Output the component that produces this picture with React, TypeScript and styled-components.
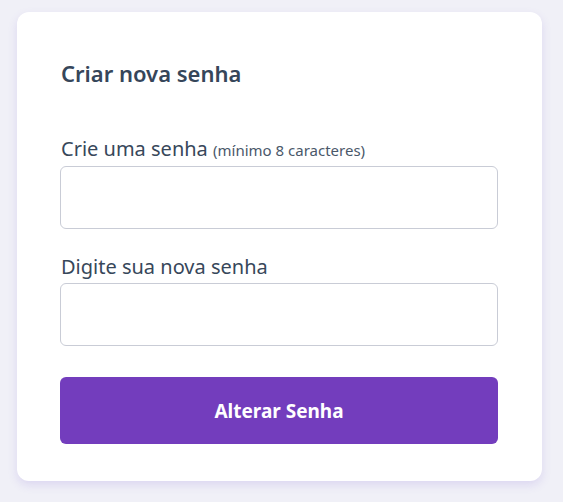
import React from "react";
import styled, { createGlobalStyle } from "styled-components";

const GlobalStyle = createGlobalStyle`
  html, body {
    margin: 0;
    padding: 0;
    background: #f0f0f7;
    font-family: "Noto Sans", "Open Sans", sans-serif;
  }
  * { box-sizing: border-box; }
`;

const Page = styled.div`
  padding: 12px 21px 22px 17px;
`;

const Card = styled.form`
  background: #fff;
  border-radius: 12px;
  box-shadow: 0 4px 10px rgba(120, 90, 210, 0.16);
  padding: 46px 44px 37px 43px;
  display: flex;
  flex-direction: column;
`;

const Title = styled.h2`
  margin: 0 0 48px 1px;
  font-size: 22px;
  line-height: 30px;
  font-weight: 600;
  color: #36465a;
`;

const Field = styled.div<{ last?: boolean }>`
  display: flex;
  flex-direction: column;
  margin-bottom: ${p => (p.last ? "31px" : "25px")};
`;

const Label = styled.label`
  font-size: 20px;
  line-height: 26px;
  color: #37475a;
  margin: 0 0 3px 1px;
`;

const Hint = styled.small`
  font-size: 15px;
  color: #4a586a;
`;

const Input = styled.input`
  height: 63px;
  border: 1px solid #c9ccd6;
  border-radius: 6px;
  background: #fff;
  font-size: 16px;
  padding: 0 16px;
  outline: none;
`;

const Button = styled.button`
  height: 67px;
  border: none;
  border-radius: 6px;
  background: #733dbd;
  color: #fff;
  font-family: inherit;
  font-size: 19px;
  font-weight: 700;
  cursor: pointer;
`;

export default function App() {
  return (
    <>
      <GlobalStyle />
      <Page>
        <Card onSubmit={e => e.preventDefault()}>
          <Title>Criar nova senha</Title>
          <Field>
            <Label>
              Crie uma senha <Hint>(mínimo 8 caracteres)</Hint>
            </Label>
            <Input type="password" />
          </Field>
          <Field last>
            <Label>Digite sua nova senha</Label>
            <Input type="password" />
          </Field>
          <Button type="submit">Alterar Senha</Button>
        </Card>
      </Page>
    </>
  );
}
